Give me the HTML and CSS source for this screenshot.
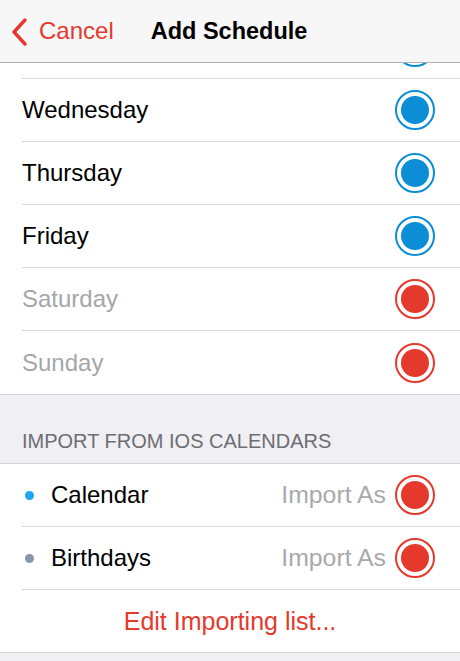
FILE: index.html
```html
<!DOCTYPE html>
<html lang="en">
<head>
  <meta charset="UTF-8">
  <meta name="viewport" content="width=device-width, initial-scale=1.0">
  <title>Add Schedule</title>
  <link rel="stylesheet" href="styles.css">
</head>
<body>
  <header class="navbar">
    <a class="back" href="#">
      <svg class="chevron" width="20" height="28" viewBox="0 0 20 28"><polyline points="15,2 4,14 15,26" fill="none" stroke="#e5392d" stroke-width="3.4" stroke-linecap="round" stroke-linejoin="round"/></svg>
      <span class="back-text">Cancel</span>
    </a>
    <h1>Add Schedule</h1>
  </header>

  <main class="content">
    <ul class="list days">
      <!-- fila del martes, tapada por la barra -->
      <li class="row"><span class="label"></span><span class="toggle blue"></span></li>
      <li class="row"><span class="label">Wednesday</span><span class="toggle blue"></span></li>
      <li class="row"><span class="label">Thursday</span><span class="toggle blue"></span></li>
      <li class="row"><span class="label">Friday</span><span class="toggle blue"></span></li>
      <li class="row off"><span class="label">Saturday</span><span class="toggle red"></span></li>
      <li class="row off"><span class="label">Sunday</span><span class="toggle red"></span></li>
    </ul>

    <h2 class="section">IMPORT FROM IOS CALENDARS</h2>

    <ul class="list">
      <li class="row cal"><span class="dot sky"></span><span class="label">Calendar</span><span class="hint">Import As</span><span class="toggle red"></span></li>
      <li class="row cal"><span class="dot slate"></span><span class="label">Birthdays</span><span class="hint">Import As</span><span class="toggle red"></span></li>
      <li class="row action"><a href="#">Edit Importing list...</a></li>
    </ul>
  </main>
</body>
</html>
```

FILE: styles.css
```css
* { box-sizing: border-box; }

body {
  margin: 0;
  font-family: "Liberation Sans", Arial, sans-serif;
  background: #efeff4;
  color: #000;
  height: 661px;
  overflow: hidden;
}

.navbar {
  position: relative;
  z-index: 2;
  height: 63px;
  display: flex;
  align-items: center;
  background: #f7f7f8;
  border-bottom: 1px solid #b2b2b2;
  padding-left: 10px;
}

.back {
  display: flex;
  align-items: center;
  color: #e5392d;
  text-decoration: none;
  font-size: 24px;
  line-height: 28px;
}
.back .chevron { display: block; flex: none; margin-right: 9px; margin-top: 1px; }

.navbar h1 {
  margin: 0 0 0 37px;
  font-size: 23.5px;
  line-height: 28px;
  font-weight: bold;
}

/* la lista esta desplazada, el martes queda bajo la barra */
.content { margin-top: -47px; }

.list {
  list-style: none;
  margin: 0;
  padding: 0 0 0 22px;
  background: #fff;
}

.row {
  display: flex;
  align-items: center;
  height: 63px;
  padding-right: 25px;
  border-bottom: 1px solid #d9d9dc;
  font-size: 24px;
}
.row:last-child { border-bottom: none; }
.row .label { flex: 1; }
.row.off .label { color: #a6a6a9; }

.days { border-bottom: 1px solid #d4d4d7; }

.toggle {
  width: 40px;
  height: 40px;
  border-radius: 50%;
  border: 2px solid currentColor;
  display: flex;
  align-items: center;
  justify-content: center;
}
.toggle::after {
  content: "";
  width: 28px;
  height: 28px;
  border-radius: 50%;
  background: currentColor;
}
.toggle.blue { color: #0b8ed6; }
.toggle.red { color: #e5392d; }

.section {
  margin: 0;
  padding: 35px 22px 10px;
  font-size: 20px;
  font-weight: normal;
  color: #6d6d72;
  border-bottom: 1px solid #d4d4d7;
}

.cal .dot {
  width: 9px;
  height: 9px;
  border-radius: 50%;
  margin: 0 17px 0 3px;
}
.dot.sky { background: #1fa6ef; }
.dot.slate { background: #8896ad; }
.hint { color: #a9a9ab; margin-right: 9px; font-size: 24.8px; }

.action {
  justify-content: center;
  padding-right: 22px;
  height: 62px;
  font-size: 25px;
}
.action a {
  color: #e5392d;
  text-decoration: none;
}

.list:last-child { border-bottom: 1px solid #d4d4d7; }
```
